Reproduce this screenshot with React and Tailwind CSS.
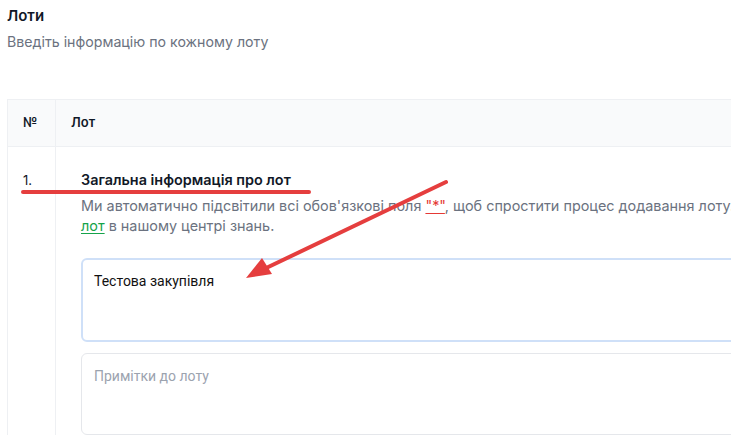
export default function App() {
  return (
    <div
      className="relative w-[731px] h-[442px] overflow-hidden bg-white text-[#111827]"
      style={{ fontFamily: "Inter, 'Noto Sans', sans-serif" }}
    >
      <div className="pl-[7px] pt-[5px]">
        <h2 className="text-[15px] font-semibold leading-[22px]">Лоти</h2>
        <p className="mt-[5px] text-[14.2px] leading-[20px] text-[#6b7280]">
          Введіть інформацію по кожному лоту
        </p>

        <div className="mt-[47px] w-[900px] border-l border-t border-[#eef0f3]">
          <div className="flex h-[47px] bg-[#f9fafb] border-b border-[#eef0f3] text-[13px] font-semibold">
            <div className="w-[48px] flex items-center pl-[15px] border-r border-[#eef0f3]">№</div>
            <div className="flex-1 flex items-center pl-[15px]">Лот</div>
          </div>
          <div className="flex">
            <div className="w-[48px] pl-[15px] pt-[23px] text-[13px] leading-[20px] border-r border-[#eef0f3]">1.</div>
            <div className="flex-1 pl-[25px] pt-[23px]">
              <div className="text-[14.4px] font-semibold leading-[20px]">Загальна інформація про лот</div>
              <p className="mt-[6px] text-[14.4px] leading-[20px] text-[#6b7280] whitespace-nowrap">
                Ми автоматично підсвітили всі обов'язкові поля{" "}
                <span className="text-[#e53935] underline underline-offset-2">"*"</span>, щоб
                спростити процес додавання лоту.
                <br />
                <a className="text-[#16a34a] underline underline-offset-2">лот</a> в нашому центрі знань.
              </p>
              <div
                className="mt-[22px] h-[84px] rounded-md border-2 border-[#cfe0f8] px-[11px] pt-[11px] text-[14px] leading-[20px] text-[#111]"
                style={{ fontFamily: "Roboto, sans-serif" }}
              >
                Тестова закупівля
              </div>
              <div
                className="mt-[11px] h-[82px] rounded-md border border-[#e5e7eb] px-[12px] pt-[12px] text-[14px] leading-[20px] text-[#9ca3af]"
                style={{ fontFamily: "Roboto, sans-serif" }}
              >
                Примітки до лоту
              </div>
            </div>
          </div>
        </div>
      </div>

      {/* annotations */}
      <svg className="absolute left-0 top-0 pointer-events-none" width="731" height="442">
        <line x1="23" y1="192" x2="309" y2="192" stroke="#e53e3e" strokeWidth="4" strokeLinecap="round" />
        <line x1="446" y1="182" x2="262" y2="270" stroke="#e53e3e" strokeWidth="4" strokeLinecap="round" />
        <polygon points="246,278 262,258 272,274" fill="#e53e3e" />
      </svg>
    </div>
  );
}
